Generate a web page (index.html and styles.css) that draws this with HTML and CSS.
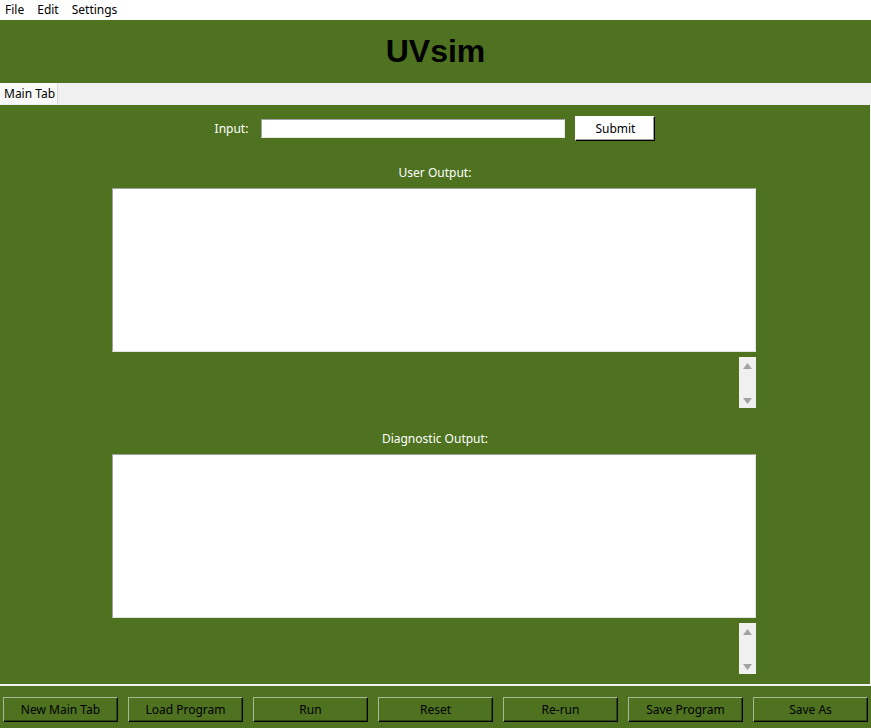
FILE: index.html
```html
<!DOCTYPE html>
<html>
<head>
<meta charset="utf-8">
<link rel="stylesheet" href="styles.css">
</head>
<body>
<div class="menubar">
  <span class="menu-item">File</span>
  <span class="menu-item">Edit</span>
  <span class="menu-item">Settings</span>
</div>
<header class="header"><h1 class="title">UVsim</h1></header>
<div class="tabbar"><div class="tab">Main Tab</div></div>
<main class="frame">
  <div class="input-row">
    <label class="label input-label">Input:</label>
    <div class="input-field"></div>
    <button class="submit">Submit</button>
  </div>
  <div class="section-label first">User Output:</div>
  <div class="textbox"></div>
  <div class="scroll-row">
    <div class="scrollbar">
      <svg class="arrow" width="9" height="6" viewBox="0 0 9 6"><path d="M4.5 0 L9 6 L0 6 Z" fill="#a3a3a3"/></svg>
      <svg class="arrow" width="9" height="6" viewBox="0 0 9 6"><path d="M0 0 L9 0 L4.5 6 Z" fill="#a3a3a3"/></svg>
    </div>
  </div>
  <div class="section-label">Diagnostic Output:</div>
  <div class="textbox"></div>
  <div class="scroll-row">
    <div class="scrollbar">
      <svg class="arrow" width="9" height="6" viewBox="0 0 9 6"><path d="M4.5 0 L9 6 L0 6 Z" fill="#a3a3a3"/></svg>
      <svg class="arrow" width="9" height="6" viewBox="0 0 9 6"><path d="M0 0 L9 0 L4.5 6 Z" fill="#a3a3a3"/></svg>
    </div>
  </div>
</main>
<footer class="buttonbar">
  <button class="btn">New Main Tab</button>
  <button class="btn">Load Program</button>
  <button class="btn">Run</button>
  <button class="btn">Reset</button>
  <button class="btn">Re-run</button>
  <button class="btn">Save Program</button>
  <button class="btn">Save As</button>
</footer>
</body>
</html>
```
FILE: styles.css
```css
* { box-sizing: border-box; }
html, body {
  margin: 0;
  padding: 0;
  width: 871px;
  height: 728px;
  overflow: hidden;
  background: #4e721f;
  font-family: "Noto Sans", "Open Sans", sans-serif;
  font-size: 12px;
}
.menubar {
  height: 20px;
  background: #ffffff;
  display: flex;
  align-items: center;
  gap: 13px;
  padding-left: 5px;
}
.menu-item {
  color: #000;
  line-height: 20px;
}
.header {
  height: 63px;
  background: #4e721f;
  display: flex;
  align-items: center;
  justify-content: center;
}
.title {
  margin: 0;
  font-family: "Liberation Sans", Arial, sans-serif;
  font-weight: bold;
  font-size: 32px;
  color: #000;
}
.tabbar {
  height: 22px;
  background: #f0f0f0;
  display: flex;
}
.tab {
  width: 58px;
  height: 21px;
  background: #f9f9f9;
  border-right: 1px solid #dadada;
  padding-left: 4px;
  line-height: 21px;
  color: #000;
}
.frame {
  height: 581px;
  background: #4e721f;
  border-right: 1px solid #f0f0f0;
  border-bottom: 2px solid #f0f0f0;
  display: flex;
  flex-direction: column;
  align-items: center;
  padding-top: 11px;
}
.input-row {
  display: flex;
  align-items: center;
  height: 25px;
}
.label { color: #fff; }
.input-label { margin-right: 13px; }
.input-field {
  width: 304px;
  height: 19px;
  background: #fff;
  border-top: 1px solid #a0a0a0;
  border-left: 1px solid #a0a0a0;
  border-right: 1px solid #e8e8e8;
  border-bottom: 1px solid #e8e8e8;
  margin-right: 10px;
}
.submit {
  width: 80px;
  height: 25px;
  background: #fff;
  font: inherit;
  color: #000;
  border: 1px solid;
  border-color: #ffffff #000 #000 #ffffff;
  box-shadow: inset -1px -1px 0 #a0a0a0;
  padding: 0;
}
.section-label {
  color: #fff;
  line-height: 16px;
  margin-top: 23px;
  margin-bottom: 7px;
}
.section-label.first { margin-top: 24px; }
.textbox {
  width: 644px;
  height: 164px;
  background: #fff;
  border-top: 1px solid #a0a0a0;
  border-left: 1px solid #a0a0a0;
  border-right: 1px solid #e3e3e3;
  border-bottom: 1px solid #e3e3e3;
  margin-right: 2px;
}
.scroll-row {
  width: 644px;
  display: flex;
  justify-content: flex-end;
  margin-top: 5px;
  margin-right: 2px;
}
.scrollbar {
  width: 17px;
  height: 51px;
  background: #f0f0f0;
  display: flex;
  flex-direction: column;
  align-items: center;
  justify-content: space-between;
  padding: 6px 0 4px;
}
.buttonbar {
  height: 42px;
  display: flex;
  gap: 10px;
  padding: 11px 0 0 3px;
}
.btn {
  width: 115px;
  height: 25px;
  background: #4e721f;
  font: inherit;
  color: #000;
  padding: 0;
  border: 1px solid;
  border-color: #a9b996 #000 #000 #a9b996;
  box-shadow: inset -1px -1px 0 #2f4712;
}
```
